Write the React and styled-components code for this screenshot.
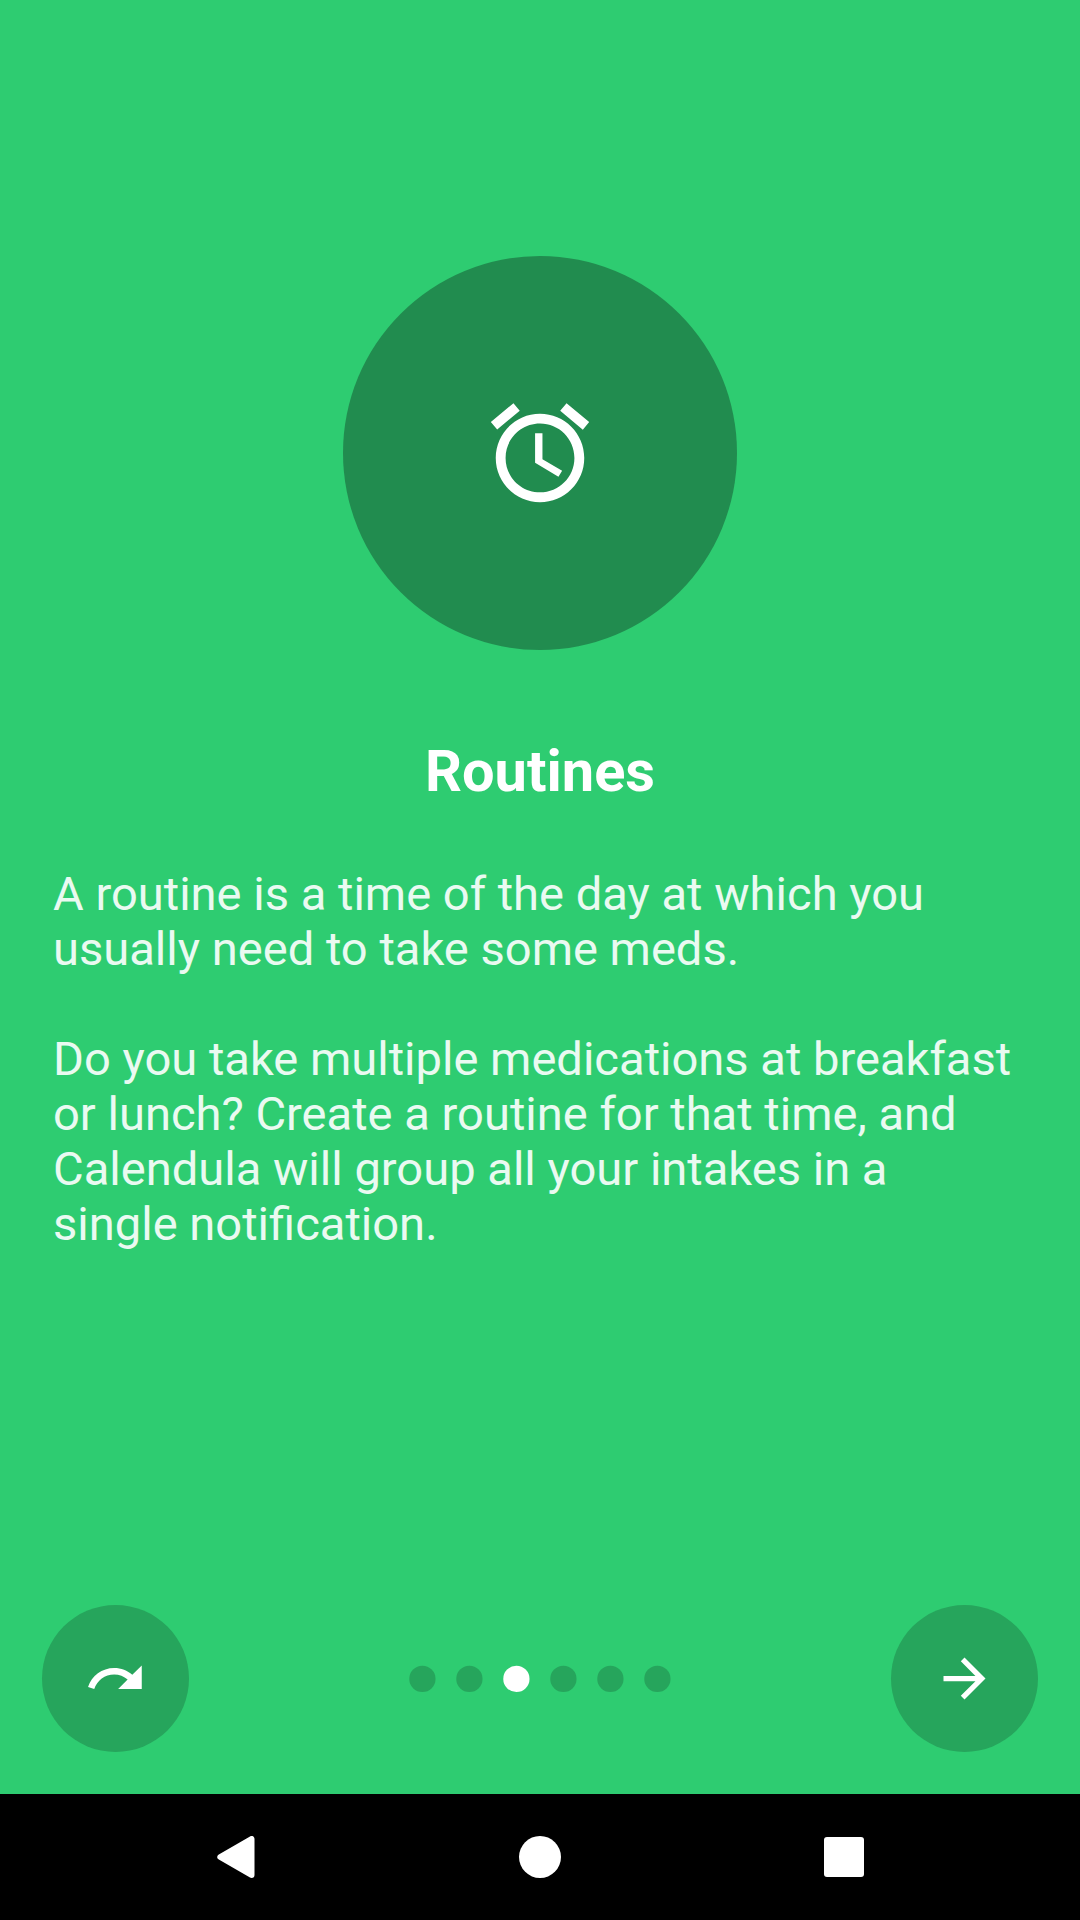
import React from "react";
import styled, { createGlobalStyle } from "styled-components";

const GlobalStyle = createGlobalStyle`
  html, body { margin: 0; padding: 0; }
  *, *::before, *::after { box-sizing: border-box; }
  body { font-family: Roboto, "Noto Sans", sans-serif; background: #2ecc71; }
`;

const Screen = styled.div`
  display: flex;
  flex-direction: column;
  width: 1080px;
  height: 1920px;
  overflow: hidden;
  background: #2ecc71;
`;

const Slide = styled.main`
  flex: 1;
  display: flex;
  flex-direction: column;
  align-items: center;
  padding: 256px 53px 0;
`;

const Emblem = styled.div`
  display: flex;
  align-items: center;
  justify-content: center;
  width: 394px;
  height: 394px;
  border-radius: 50%;
  background: #218c4f;
`;

const Title = styled.h1`
  margin: 87px 0 0;
  font-size: 57.75px;
  line-height: 68px;
  font-weight: 700;
  color: #fff;
`;

const Description = styled.div`
  display: flex;
  flex-direction: column;
  gap: 55px;
  align-self: stretch;
  margin-top: 61px;
  padding-right: 10px;
`;

const Paragraph = styled.p`
  margin: 0;
  font-size: 47.1px;
  line-height: 55px;
  color: #eafaf1;
`;

const Pager = styled.footer`
  display: flex;
  align-items: center;
  justify-content: space-between;
  height: 147px;
  margin: 0 42px 42px;
`;

const RoundButton = styled.button`
  display: flex;
  align-items: center;
  justify-content: center;
  width: 147px;
  height: 147px;
  padding: 0;
  border: 0;
  border-radius: 50%;
  background: #26a55c;
`;

const Dots = styled.div`
  display: flex;
  gap: 20px;
`;

const Dot = styled.span`
  width: 27px;
  height: 27px;
  clip-path: circle(13.12px at 13.4px 13.88px);
  background: ${(p) => (p.$active ? "#fff" : "#26a55c")};
`;

const SystemBar = styled.nav`
  display: grid;
  grid-template-columns: repeat(3, 304px);
  justify-content: center;
  align-items: center;
  justify-items: center;
  height: 126px;
  background: #000;
`;

const HomeMark = styled.span`
  width: 42px;
  height: 42px;
  border-radius: 50%;
  background: #fff;
`;

const RecentsMark = styled.span`
  width: 40px;
  height: 40px;
  border-radius: 3px;
  background: #fff;
`;

const Glyph = styled.svg`
  display: block;
  width: ${(p) => p.$size}px;
  height: ${(p) => p.$size}px;
  fill: #fff;
`;

const ALARM =
  "M22 5.72l-4.6-3.86-1.29 1.53 4.6 3.86L22 5.72zM7.88 3.39L6.6 1.86 2 5.71l1.29 1.53 4.59-3.85zM12.5 8H11v6l4.75 2.85.75-1.23-4-2.37V8zM12 4c-4.97 0-9 4.03-9 9s4.02 9 9 9c4.97 0 9-4.03 9-9s-4.03-9-9-9zm0 16c-3.87 0-7-3.13-7-7s3.13-7 7-7 7 3.13 7 7-3.13 7-7 7z";
const SKIP =
  "M18.4 10.6C16.55 8.99 14.15 8 11.5 8c-4.65 0-8.58 3.03-9.96 7.22L3.9 16c1.05-3.19 4.05-5.5 7.6-5.5 1.95 0 3.73.72 5.12 1.88L13 16h9V7l-3.6 3.6z";
const FORWARD = "M12 4l-1.41 1.41L16.17 11H4v2h12.17l-5.58 5.59L12 20l8-8z";

function Icon({ path, size }) {
  return (
    <Glyph $size={size} viewBox="0 0 24 24" aria-hidden="true">
      <path d={path} />
    </Glyph>
  );
}

const PAGE_COUNT = 6;
const CURRENT_PAGE = 2;

export default function App() {
  return (
    <Screen>
      <GlobalStyle />
      <Slide>
        <Emblem>
          <Icon path={ALARM} size={118} />
        </Emblem>
        <Title>Routines</Title>
        <Description>
          <Paragraph>
            A routine is a time of the day at which you usually need to take some meds.
          </Paragraph>
          <Paragraph>
            Do you take multiple medications at breakfast or lunch? Create a routine for that
            time, and Calendula will group all your intakes in a single notification.
          </Paragraph>
        </Description>
      </Slide>
      <Pager>
        <RoundButton aria-label="Skip">
          <Icon path={SKIP} size={63} />
        </RoundButton>
        <Dots>
          {Array.from({ length: PAGE_COUNT }, (_, i) => (
            <Dot key={i} $active={i === CURRENT_PAGE} />
          ))}
        </Dots>
        <RoundButton aria-label="Next">
          <Icon path={FORWARD} size={63} />
        </RoundButton>
      </Pager>
      <SystemBar>
        <Glyph $size={42} viewBox="0 0 42 42" aria-hidden="true">
          <path
            d="M5.3 21L36.5 3V39z"
            stroke="#fff"
            strokeWidth="6"
            strokeLinejoin="round"
          />
        </Glyph>
        <HomeMark />
        <RecentsMark />
      </SystemBar>
    </Screen>
  );
}
